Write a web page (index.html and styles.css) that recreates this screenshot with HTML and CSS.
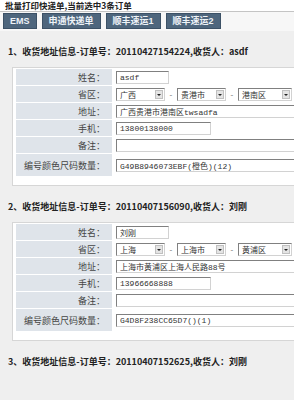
FILE: index.html
```html
<!DOCTYPE html>
<html lang="zh-CN">
<head>
    <meta charset="UTF-8">
    <title>批量打印快递单</title>
    <link rel="stylesheet" href="styles.css">
</head>
<body>
    <div class="page">
    <div class="top-title">批量打印快递单,当前选中3条订单</div>

    <!-- 快递单按钮 -->
    <div class="btn-bar">
        <button>EMS</button>
        <button>申通快递单</button>
        <button>顺丰速运1</button>
        <button>顺丰速运2</button>
    </div>

    <div class="order">
        <h3>1、收货地址信息-订单号：20110427154224,收货人：asdf</h3>
        <table class="addr">
            <tr><th>姓名：</th><td><input class="w-name" value="asdf"></td></tr>
            <tr><th>省区：</th><td>
                <span class="sel">广西<i></i></span><span class="dash">-</span><span class="sel">贵港市<i></i></span><span class="dash">-</span><span class="sel sel-last">港南区<i></i></span>
            </td></tr>
            <tr><th>地址：</th><td><input class="w-full" value="广西贵港市港南区twsadfa"></td></tr>
            <tr><th>手机：</th><td><input class="w-phone" value="13800138000"></td></tr>
            <tr><th>备注：</th><td><input class="w-full" value=""></td></tr>
            <tr class="last"><th>编号颜色尺码数量：</th><td><input class="w-full" value="G49B8946073EBF(橙色)(12)"></td></tr>
        </table>
    </div>

    <div class="order">
        <h3>2、收货地址信息-订单号：20110407156090,收货人：刘刚</h3>
        <table class="addr">
            <tr><th>姓名：</th><td><input class="w-name" value="刘刚"></td></tr>
            <tr><th>省区：</th><td>
                <span class="sel">上海<i></i></span><span class="dash">-</span><span class="sel">上海市<i></i></span><span class="dash">-</span><span class="sel sel-last">黄浦区<i></i></span>
            </td></tr>
            <tr><th>地址：</th><td><input class="w-full" value="上海市黄浦区上海人民路88号"></td></tr>
            <tr><th>手机：</th><td><input class="w-phone" value="13966668888"></td></tr>
            <tr><th>备注：</th><td><input class="w-full" value=""></td></tr>
            <tr class="last"><th>编号颜色尺码数量：</th><td><input class="w-full" value="G4D8F238CC65D7()(1)"></td></tr>
        </table>
    </div>

    <div class="order">
        <h3>3、收货地址信息-订单号：20110407152625,收货人：刘刚</h3>
    </div>
    </div>
</body>
</html>
```

FILE: styles.css
```css
/* 页面 */
body {
    margin: 0;
    background-color: #efefef;
    font-family: "Noto Sans CJK SC", "Liberation Sans", sans-serif;
    color: #222;
}

.page {
    width: 294px;
    height: 400px;
    overflow: hidden;
}

.top-title {
    height: 11px;
    line-height: 11px;
    padding-left: 5px;
    font-size: 8.5px;
    font-weight: bold;
    background-color: #fff;
    border-bottom: 1px solid #c4c4c4;
}

.btn-bar {
    display: flex;
    gap: 5px;
    padding: 1px 3px 2px;
    background-color: #f7f7f7;
}

.btn-bar button {
    height: 16px;
    padding: 0 6px;
    border: 1px solid #3c5166;
    background-color: #4e667d;
    color: #eef3f8;
    font-family: "Liberation Sans", "Noto Sans CJK SC", sans-serif;
    font-size: 9px;
    font-weight: bold;
    line-height: 14px;
}

/* 订单 */
.order h3 {
    margin: 0;
    padding: 12px 0 0 8px;
    height: 24px;
    line-height: 18px;
    font-size: 9px;
    font-weight: bold;
    white-space: nowrap;
}

.addr {
    margin: 0 0 0 12px;
    width: 300px;
    border: 1px solid #d6d6d6;
    background-color: #fff;
    border-spacing: 0 1px;
    padding: 0 3px 8px;
    font-size: 9px;
}

.addr th {
    width: 89px;
    padding: 0 7px 0 0;
    height: 16px;
    text-align: right;
    font-weight: normal;
    color: #444;
    background-color: #dfe4ea;
    white-space: nowrap;
}

.addr td {
    padding: 0 0 0 4px;
    height: 16px;
    white-space: nowrap;
}

.addr tr.last th,
.addr tr.last td {
    height: 22px;
}

.addr input {
    box-sizing: border-box;
    height: 13px;
    margin: 0;
    padding: 0 3px;
    border: 1px solid;
    border-color: #808080 #d2d2d2 #d2d2d2 #808080;
    font-family: "Liberation Mono", "Noto Sans CJK SC", monospace;
    font-size: 8px;
    color: #333;
    vertical-align: middle;
}

.w-name { width: 53px; }
.w-phone { width: 95px; }
.w-full { width: 190px; }

/* 下拉框 */
.sel {
    display: inline-block;
    position: relative;
    box-sizing: border-box;
    width: 49px;
    height: 13px;
    padding-left: 3px;
    border: 1px solid;
    border-color: #808080 #d2d2d2 #d2d2d2 #808080;
    font-size: 8px;
    line-height: 11px;
    color: #333;
    vertical-align: middle;
}

.sel-last {
    width: 54px;
}

.sel i {
    position: absolute;
    right: 1px;
    top: 1px;
    width: 8px;
    height: 9px;
    background-color: #e4e4e4;
    border: 1px solid #c0c0c0;
    box-sizing: border-box;
}

.sel i::after {
    content: "";
    position: absolute;
    left: 1px;
    top: 3px;
    border-left: 2px solid transparent;
    border-right: 2px solid transparent;
    border-top: 2px solid #222;
}

.dash {
    display: inline-block;
    width: 12px;
    text-align: center;
    font-size: 8px;
    color: #666;
    vertical-align: middle;
}
```
